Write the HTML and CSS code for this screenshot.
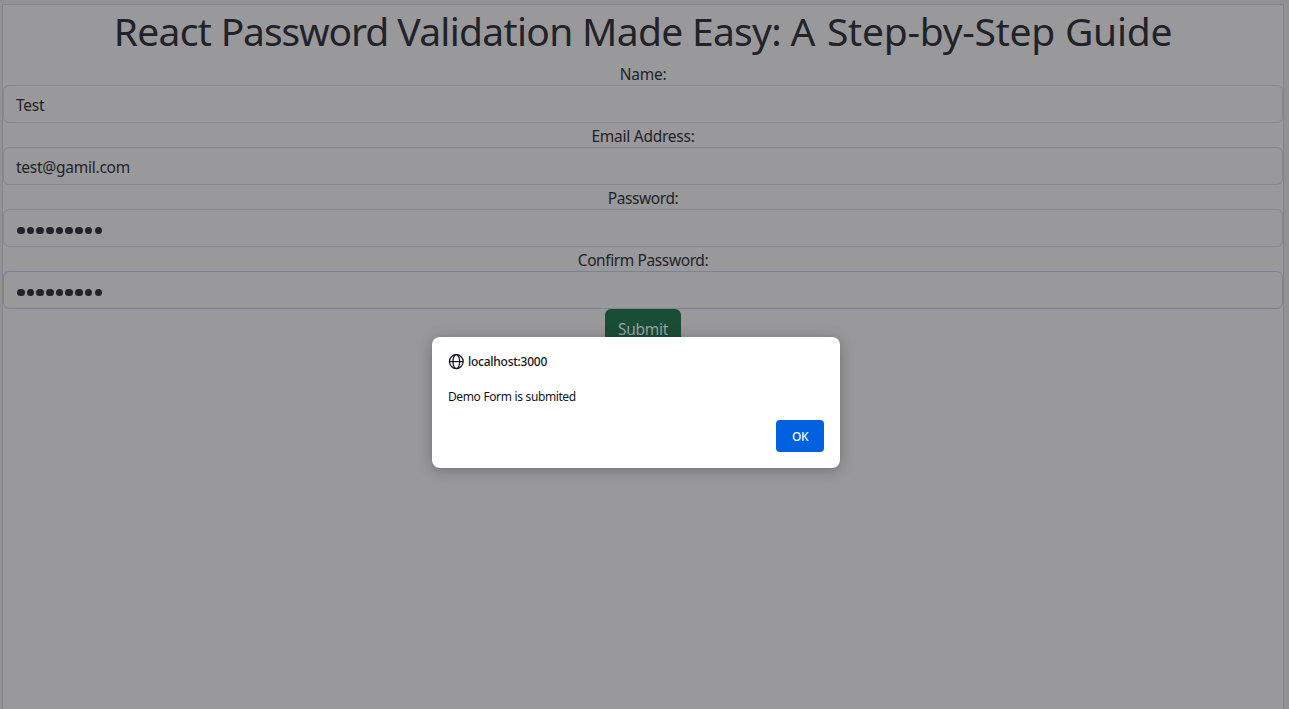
FILE: index.html
```html
<!DOCTYPE html>
<html lang="en">
<head>
<meta charset="utf-8">
<title>React Password Validation</title>
<link rel="stylesheet" href="styles.css">
</head>
<body>
<main class="page">
  <h1 class="title"><span class="snug">React </span><span class="narrow">Password </span><span class="snug">Validation Made Easy: </span><span class="wide">A </span><span class="loose">Step-by-Step Guide</span></h1>
  <form class="form">
    <label class="label">Name:</label>
    <div class="control">Test</div>
    <label class="label">Email Address:</label>
    <div class="control">test@gamil.com</div>
    <label class="label tight">Password:</label>
    <div class="control dots"><i></i><i></i><i></i><i></i><i></i><i></i><i></i><i></i><i></i></div>
    <label class="label tight">Confirm Password:</label>
    <div class="control dots focused"><i></i><i></i><i></i><i></i><i></i><i></i><i></i><i></i><i></i></div>
    <button class="submit" type="button">Submit</button>
  </form>
</main>
<div class="dialog" role="dialog">
  <div class="origin">
    <svg class="globe" viewBox="0 0 16 16" fill="none" stroke="#15141a" stroke-width="1.25"><circle cx="8.3" cy="7.6" r="6.9"/><ellipse cx="8.3" cy="7.6" rx="3.4" ry="6.9"/><path d="M1.4 7.6h13.8"/></svg>
    <span class="host">localhost:3000</span>
  </div>
  <p class="message">Demo Form is submited</p>
  <button class="ok" type="button">OK</button>
</div>
</body>
</html>
```
FILE: styles.css
```css
* { box-sizing: border-box; }
html, body { height: 100%; }
body {
  margin: 0;
  padding: 4px 5px 0 2px;
  overflow: hidden;
  background: #929295;
  color: #212329;
  font-family: "Noto Sans", "Open Sans", sans-serif;
  font-size: 15.5px;
  letter-spacing: -0.25px;
}
.page {
  height: 705px;
  border: 1px solid #858589;
  border-bottom: 0;
  background: #99999b;
}
.title {
  margin: 0 0 8px;
  height: 48px;
  line-height: 52px;
  font-size: 39px;
  font-weight: 400;
  text-align: center;
  white-space: nowrap;
}
.snug { letter-spacing: -0.7px; }
.narrow { letter-spacing: -1.1px; }
.wide { letter-spacing: 0.7px; }
.loose { letter-spacing: -0.25px; }
.form { display: flex; flex-direction: column; }
.label { height: 24px; line-height: 26px; text-align: center; }
.tight { letter-spacing: -0.4px; }
.control {
  height: 38px;
  padding: 0 12px;
  border: 1px solid #88888c;
  border-radius: 6px;
  line-height: 39px;
}
.dots { display: flex; align-items: center; gap: 2.2px; padding: 5px 13px 0; }
.dots i { width: 7.5px; height: 7.5px; border-radius: 50%; background: #212329; }
.focused { border-color: #7b8196; }
.submit {
  align-self: center;
  width: 76px;
  height: 38px;
  padding: 1px 0 0;
  border: 0;
  border-radius: 6px;
  background: #194d36;
  color: #98a39f;
  font: inherit;
  letter-spacing: -0.25px;
}
.dialog {
  position: absolute;
  left: 432px;
  top: 337px;
  width: 408px;
  height: 131px;
  padding: 16px;
  display: flex;
  flex-direction: column;
  border-radius: 8px;
  background: #fff;
  color: #15141a;
  box-shadow: 0 2px 14px rgba(20, 20, 26, .3);
  font-size: 12px;
}
.origin { display: flex; align-items: center; gap: 4px; height: 17px; }
.globe { width: 16px; height: 16px; }
.host { font-weight: 500; }
.message { margin: 18px 0 0; height: 17px; line-height: 17px; letter-spacing: -0.4px; word-spacing: 0.3px; }
.ok {
  align-self: flex-end;
  margin-top: 15px;
  width: 48px;
  height: 32px;
  padding: 1px 0 0;
  border: 0;
  border-radius: 4px;
  background: #0061e0;
  color: #fbfbfe;
  font: 500 12px "Noto Sans", sans-serif;
  letter-spacing: -0.5px;
}
```
